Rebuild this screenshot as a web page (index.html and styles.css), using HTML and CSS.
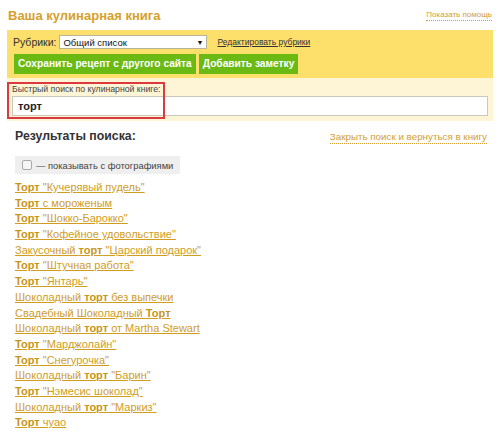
FILE: index.html
```html
<!DOCTYPE html>
<html lang="ru">
<head>
<meta charset="utf-8">
<link rel="stylesheet" href="styles.css">
</head>
<body>
<div class="page">
  <div class="header">
    <h1 class="title">Ваша кулинарная книга</h1>
    <a class="help">Показать помощь</a>
  </div>
  <div class="panel">
    <div class="rubric-row">
      <span class="rubric-label">Рубрики:</span>
      <div class="select"><span>Общий список</span><span class="arrow">▼</span></div>
      <a class="edit-link">Редактировать рубрики</a>
    </div>
    <div class="buttons">
      <span class="btn">Сохранить рецепт с другого сайта</span>
      <span class="btn">Добавить заметку</span>
    </div>
  </div>
  <div class="search">
    <div class="search-label">Быстрый поиск по кулинарной книге:</div>
    <div class="search-input">торт</div>
    <div class="highlight"></div>
  </div>
  <div class="results-head">
    <h2 class="results-title">Результаты поиска:</h2>
    <a class="close-link">Закрыть поиск и вернуться в книгу</a>
  </div>
  <div class="photo-toggle"><span class="checkbox"></span>— показывать с фотографиями</div>
  <ul class="results">
    <li><a><b>Торт</b> "Кучерявый пудель"</a></li>
    <li><a><b>Торт</b> с мороженым</a></li>
    <li><a><b>Торт</b> "Шокко-Барокко"</a></li>
    <li><a><b>Торт</b> "Кофейное удовольствие"</a></li>
    <li><a>Закусочный <b>торт</b> "Царский подарок"</a></li>
    <li><a><b>Торт</b> "Штучная работа"</a></li>
    <li><a><b>Торт</b> "Янтарь"</a></li>
    <li><a>Шоколадный <b>торт</b> без выпечки</a></li>
    <li><a>Свадебный Шоколадный <b>Торт</b></a></li>
    <li><a>Шоколадный <b>торт</b> от Martha Stewart</a></li>
    <li><a><b>Торт</b> "Марджолайн"</a></li>
    <li><a><b>Торт</b> "Снегурочка"</a></li>
    <li><a>Шоколадный <b>торт</b> "Барин"</a></li>
    <li><a><b>Торт</b> "Нэмесис шоколад"</a></li>
    <li><a>Шоколадный <b>торт</b> "Маркиз"</a></li>
    <li><a><b>Торт</b> чуао</a></li>
  </ul>
</div>
</body>
</html>
```
FILE: styles.css
```css
html, body {
  margin: 0;
  padding: 0;
  background: #fff;
}
body {
  font-family: "Liberation Sans", Arial, sans-serif;
  font-size: 12px;
  color: #333;
}
.page {
  width: 486px;
  margin-left: 7px;
}
.header {
  display: flex;
  justify-content: space-between;
  align-items: flex-end;
  height: 30px;
}
.title {
  margin: 0 0 7px 1px;
  font-size: 13px;
  font-weight: bold;
  color: #d6a12a;
}
.help {
  font-size: 8px;
  color: #d2a032;
  border-bottom: 1px dotted #d2a032;
  margin: 0 1px 9px 0;
  line-height: 10px;
}
.panel {
  background: #fddf6c;
  padding: 5px 6px 2px 6px;
}
.rubric-row {
  display: flex;
  align-items: center;
  font-size: 10.5px;
  height: 14px;
}
.rubric-label {
  color: #333;
  margin-right: 3px;
}
.select {
  width: 140px;
  height: 12px;
  background: #fff;
  border: 1px solid #b9b39a;
  display: flex;
  justify-content: space-between;
  align-items: center;
  font-size: 9.5px;
  padding: 0 3px;
  color: #111;
}
.arrow {
  font-size: 7px;
}
.edit-link {
  margin-left: 10px;
  font-size: 8.5px;
  text-decoration: underline;
  color: #333;
}
.buttons {
  display: flex;
  gap: 3px;
  margin-top: 5px;
  padding-bottom: 2px;
}
.btn {
  background: #6aba13;
  color: #fff;
  font-weight: bold;
  font-size: 10.2px;
  padding: 0 4px;
  height: 20px;
  line-height: 20px;
}
.btn:first-child {
  margin-left: 1px;
}
.search {
  position: relative;
  background: #fef4d6;
  padding: 6px 5px 5px 5px;
}
.search-label {
  font-size: 8.7px;
  color: #444;
  line-height: 10px;
}
.search-input {
  margin-top: 2px;
  height: 18px;
  line-height: 18px;
  border: 1px solid #ccc8b8;
  background: #fff;
  padding: 0 5px;
  font-size: 11px;
  font-weight: bold;
  color: #222;
}
.highlight {
  position: absolute;
  left: 0;
  top: 4px;
  width: 154px;
  height: 33px;
  border: 2px solid #dc3a3e;
}
.results-head {
  display: flex;
  justify-content: space-between;
  align-items: center;
  margin-top: 7px;
  padding: 0 6px 0 8px;
}
.results-title {
  margin: 0;
  font-size: 12.3px;
  font-weight: bold;
  color: #333;
}
.close-link {
  font-size: 9.8px;
  color: #d2a032;
  border-bottom: 1px dotted #d2a032;
  line-height: 12px;
  margin-top: 3px;
}
.photo-toggle {
  display: inline-flex;
  align-items: center;
  margin: 12px 0 0 8px;
  background: #efefef;
  height: 18px;
  padding: 0 7px 0 7px;
  font-size: 9.4px;
  color: #444;
}
.checkbox {
  width: 8px;
  height: 8px;
  border: 1px solid #aaa;
  border-radius: 2px;
  background: #f6f6f6;
  margin-right: 4px;
}
.results {
  list-style: none;
  margin: 6px 0 0 8px;
  padding: 0;
}
.results li {
  height: 15.7px;
  line-height: 15.7px;
  font-size: 11px;
}
.results a {
  color: #d09d1e;
  text-decoration: underline;
}
.results b {
  color: #c8951a;
}
```
